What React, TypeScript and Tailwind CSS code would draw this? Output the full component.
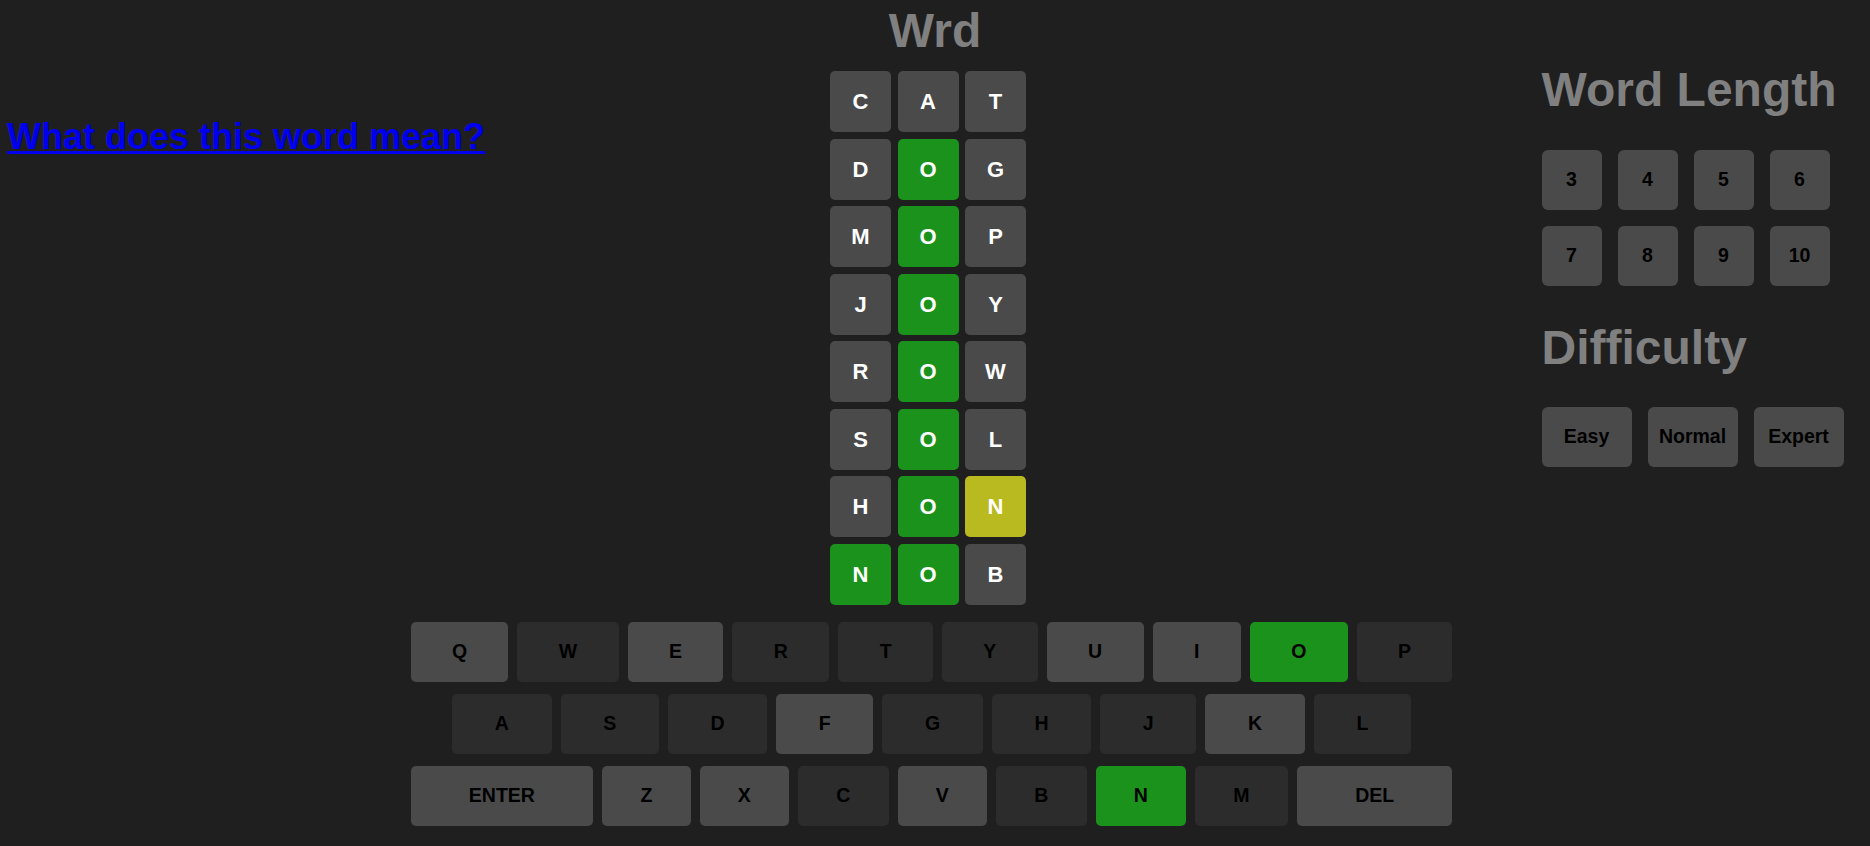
// g = green, y = yellow, x = absent
const guesses: [string, string][] = [
  ['CAT', 'xxx'],
  ['DOG', 'xgx'],
  ['MOP', 'xgx'],
  ['JOY', 'xgx'],
  ['ROW', 'xgx'],
  ['SOL', 'xgx'],
  ['HON', 'xgy'],
  ['NOB', 'ggx'],
]

const tileColors: Record<string, string> = {
  g: 'bg-[#1b921b]',
  y: 'bg-[#b9b920]',
  x: 'bg-[#4a4a4a]',
}

// key states
const absent = new Set(['W', 'R', 'T', 'Y', 'P', 'A', 'S', 'D', 'G', 'H', 'J', 'L', 'C', 'B', 'M'])
const correct = new Set(['O', 'N'])

function keyColor(k: string) {
  if (correct.has(k)) return 'bg-[#1b921b]'
  if (absent.has(k)) return 'bg-[#2c2c2c]'
  return 'bg-[#4a4a4a]'
}

function Key({ label, wide }: { label: string; wide?: boolean }) {
  return (
    <button
      className={`${keyColor(label)} ${wide ? 'grow-[1.5] px-4' : 'grow px-[10px]'} shrink basis-auto h-[60px] rounded-[5px] text-black font-bold text-[19.5px] flex items-center justify-center`}
    >
      {label}
    </button>
  )
}

function Keyboard() {
  return (
    <div className="w-[1042px] mr-[7px] mt-[17px] flex flex-col gap-3">
      <div className="flex gap-[9px]">
        {'QWERTYUIOP'.split('').map((k) => <Key key={k} label={k} />)}
      </div>
      <div className="flex gap-[9px]">
        <div className="grow-[0.5] basis-0" />
        {'ASDFGHJKL'.split('').map((k) => <Key key={k} label={k} />)}
        <div className="grow-[0.5] basis-0" />
      </div>
      <div className="flex gap-[9px]">
        <Key label="ENTER" wide />
        {'ZXCVBNM'.split('').map((k) => <Key key={k} label={k} />)}
        <Key label="DEL" wide />
      </div>
    </div>
  )
}

export default function App() {
  return (
    <div className="min-h-screen bg-[#1f1f1f] font-['Liberation_Sans',Arial,sans-serif] grid grid-cols-[minmax(0,1fr)_auto_minmax(0,1fr)]">
      <div className="pt-[119px] pl-[7px]">
        <a href="#" className="text-[#0000ee] underline font-bold text-[36px] leading-none whitespace-nowrap">
          What does this word mean?
        </a>
      </div>

      <div className="flex flex-col items-center">
        <h1 className="pt-[7px] text-[48px] leading-none font-bold text-[#808080]">Wrd</h1>
        <div className="mt-4 mr-[14px] grid grid-cols-3 gap-[6.5px]">
          {guesses.map(([word, states], r) =>
            word.split('').map((letter, i) => (
              <div
                key={`${r}-${i}`}
                className={`${tileColors[states[i]]} w-[61px] h-[61px] rounded-[5px] flex items-center justify-center text-white font-bold text-[22px]`}
              >
                {letter}
              </div>
            ))
          )}
        </div>
        <Keyboard />
      </div>

      <div className="pl-[82px] pt-[66px]">
        <h2 className="text-[48px] leading-none font-bold text-[#808080] whitespace-nowrap">Word Length</h2>
        <div className="mt-9 grid grid-cols-[repeat(4,60px)] gap-4">
          {[3, 4, 5, 6, 7, 8, 9, 10].map((n) => (
            <button key={n} className="w-[60px] h-[60px] rounded-[6px] bg-[#4a4a4a] text-black font-bold text-[19.5px]">
              {n}
            </button>
          ))}
        </div>
        <h2 className="mt-[38px] text-[48px] leading-none font-bold text-[#808080]">Difficulty</h2>
        <div className="mt-[35px] flex gap-4">
          {['Easy', 'Normal', 'Expert'].map((d) => (
            <button key={d} className="w-[90px] h-[60px] rounded-[6px] bg-[#4a4a4a] text-black font-bold text-[19.5px]">
              {d}
            </button>
          ))}
        </div>
      </div>
    </div>
  )
}
